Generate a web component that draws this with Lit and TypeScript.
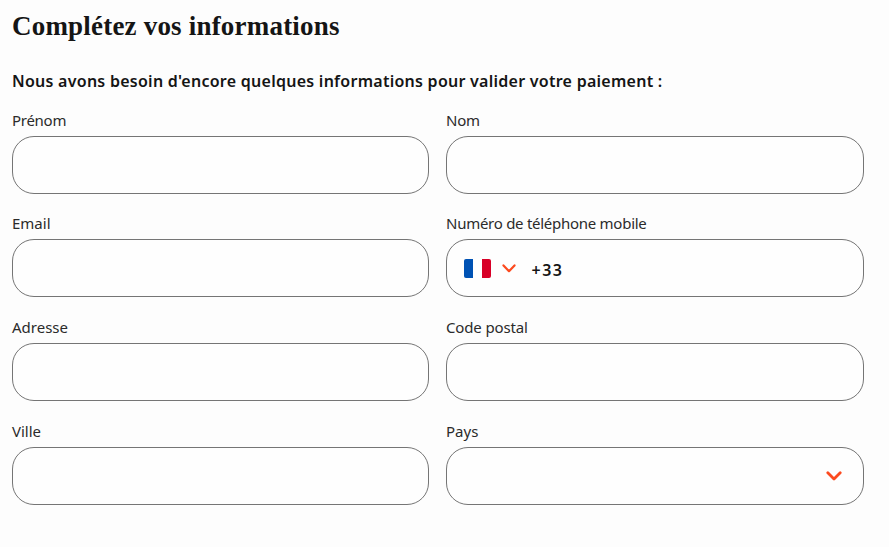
import { LitElement, html, css, svg } from "lit";
import { customElement } from "lit/decorators.js";

interface Field {
  id: string;
  label: string;
  kind?: "phone" | "select";
}

const FIELDS: Field[] = [
  { id: "prenom", label: "Prénom" },
  { id: "nom", label: "Nom" },
  { id: "email", label: "Email" },
  { id: "mobile", label: "Numéro de téléphone mobile", kind: "phone" },
  { id: "adresse", label: "Adresse" },
  { id: "postal", label: "Code postal" },
  { id: "ville", label: "Ville" },
  { id: "pays", label: "Pays", kind: "select" },
];

@customElement("app-root")
export class AppRoot extends LitElement {
  static styles = css`
    :host {
      display: block;
      box-sizing: border-box;
      height: 547px;
      padding: 9px 26px 0 12px;
      background: #fdfdfd;
      color: #151515;
      font-family: "Noto Sans", "Open Sans", sans-serif;
      overflow: hidden;
    }
    h1 {
      margin: 0;
      height: 34px;
      font: 700 27px/34px "Liberation Serif", serif;
      white-space: nowrap;
      letter-spacing: 0.2px;
    }
    .intro {
      margin: 26px 0 0;
      height: 24px;
      font-size: 16px;
      line-height: 24px;
      font-weight: 600;
      letter-spacing: 0.26px;
      white-space: nowrap;
    }
    .grid {
      display: grid;
      grid-template-columns: 417px 418px;
      column-gap: 17px;
      row-gap: 21.8px;
      margin-top: 18.6px;
    }
    .label {
      height: 24px;
      line-height: 16px;
      font-size: 15px;
      letter-spacing: -0.27px;
      color: #2b2b2b;
      white-space: nowrap;
    }
    .email,
    .adresse,
    .ville,
    .pays {
      letter-spacing: 0;
    }
    .postal {
      letter-spacing: -0.15px;
    }
    .box {
      box-sizing: border-box;
      height: 58px;
      border: 1px solid #757575;
      border-radius: 22px;
      background: #fefefe;
      display: flex;
      align-items: center;
    }
    .phone {
      padding-left: 17px;
    }
    .select {
      justify-content: flex-end;
      padding-right: 21.5px;
    }
    .arrow {
      margin-left: 10.5px;
    }
    .code {
      margin: 3px 0 0 16px;
      font-size: 16px;
      font-weight: 600;
      letter-spacing: 1.5px;
    }
    svg {
      display: block;
    }
  `;

  private chevron(w: number, h: number, sw: number) {
    return svg`<svg width=${w} height=${h} viewBox="0 0 ${w} ${h}" fill="none"
      stroke="#fc4a1f" stroke-width=${sw} stroke-linecap="round" stroke-linejoin="round">
      <path d="M${sw / 2 + 0.4} ${sw / 2 + 0.3} L${w / 2} ${h - sw / 2 - 0.7} L${w - sw / 2 - 0.4} ${sw / 2 + 0.3}" />
    </svg>`;
  }

  private box(f: Field) {
    if (f.kind === "phone") {
      return html`<div class="box phone">
        <svg width="27" height="19" viewBox="0 0 27 19">
          <path d="M9 0H18V19H9Z" fill="#fff" />
          <path d="M2 0H9V19H2Q0 19 0 17V2Q0 0 2 0Z" fill="#0052b4" />
          <path d="M18 0H25Q27 0 27 2V17Q27 19 25 19H18Z" fill="#d80027" />
        </svg>
        <div class="arrow">${this.chevron(14, 9, 2.2)}</div>
        <div class="code">+33</div>
      </div>`;
    }
    if (f.kind === "select") {
      return html`<div class="box select">${this.chevron(16, 10, 2.8)}</div>`;
    }
    return html`<div class="box"></div>`;
  }

  render() {
    return html`
      <h1>Complétez vos informations</h1>
      <p class="intro">
        Nous avons besoin d'encore quelques informations pour valider votre paiement :
      </p>
      <div class="grid">
        ${FIELDS.map(
          (f) => html`<div class="field">
            <div class="label ${f.id}">${f.label}</div>
            ${this.box(f)}
          </div>`
        )}
      </div>
    `;
  }
}
